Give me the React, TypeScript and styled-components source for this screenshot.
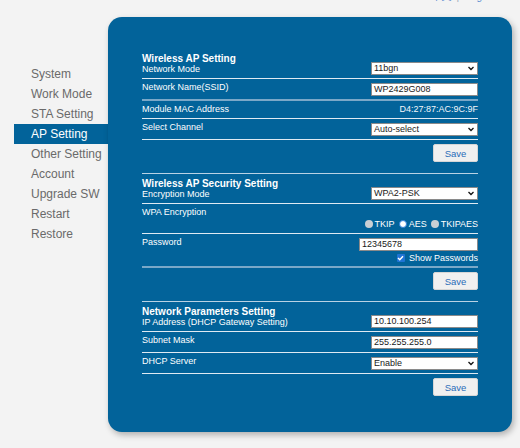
import styled, { createGlobalStyle } from "styled-components";

const GlobalStyle = createGlobalStyle`
    html, body {
        margin: 0;
        padding: 0;
        background: #f3f3f3;
        overflow: hidden;
    }
    body {
        font-family: "Liberation Sans", Arial, sans-serif;
    }
`;

const Page = styled.div`
    width: 520px;
    height: 448px;
    background: #f3f3f3;
`;

const TopBar = styled.div`
    height: 17px;
    display: flex;
    justify-content: flex-end;
    padding-right: 23px;
`;

const Lang = styled.div`
    margin-top: -9px;
    font-size: 10px;
    line-height: 12px;
    color: #5b8bd0;
    font-family: "Liberation Sans", "Noto Sans CJK SC", sans-serif;
    span {
        margin: 0 5px;
        color: #9ab;
    }
`;

const Body = styled.div`
    display: flex;
    align-items: flex-start;
`;

const Sidebar = styled.ul`
    list-style: none;
    margin: 47px 0 0;
    padding: 0 0 0 14px;
    width: 94px;
`;

const MenuItem = styled.li<{ $active?: boolean }>`
    height: 20px;
    line-height: 20px;
    padding-left: 17px;
    font-size: 12px;
    color: ${(p) => (p.$active ? "#ffffff" : "#6a6a6a")};
    background: ${(p) => (p.$active ? "#02639a" : "transparent")};
`;

const Panel = styled.div`
    width: 336px;
    height: 380px;
    padding: 32px 34px 3px;
    background: #02639a;
    border-radius: 14px;
    box-shadow: 2px 3px 6px rgba(0, 0, 0, 0.28);
`;

const Section = styled.div<{ $first?: boolean }>`
    border-top: ${(p) => (p.$first ? "none" : "1px solid #b9d2e4")};
    padding-top: 2px;
`;

const Row = styled.div<{ $thick?: boolean }>`
    display: flex;
    justify-content: space-between;
    align-items: flex-start;
    padding: 2px 0 3px;
    border-bottom: ${(p) => (p.$thick ? "2px solid #7aa8c8" : "1px solid #dfeaf3")};
    color: #ffffff;
`;

const Label = styled.div`
    font-size: 9px;
    line-height: 12px;
`;

const Title = styled.div`
    font-size: 10px;
    font-weight: bold;
    line-height: 11px;
`;

const FirstLabel = styled(Label)`
    line-height: 11px;
`;

const Value = styled.div<{ $offset?: number; $bottom?: boolean }>`
    display: flex;
    flex-direction: column;
    align-items: flex-end;
    margin-top: ${(p) => (p.$offset ?? 2)}px;
    align-self: ${(p) => (p.$bottom ? "flex-end" : "flex-start")};
`;

const Control = styled.div<{ $w?: number }>`
    position: relative;
    box-sizing: border-box;
    width: ${(p) => p.$w ?? 107}px;
    height: 13px;
    background: #ffffff;
    border: 1px solid #8a8a8a;
    font-size: 9px;
    line-height: 11px;
    padding: 0 2px;
    color: #1a1a1a;
`;

const Caret = styled.svg`
    position: absolute;
    right: 3px;
    top: 3px;
`;

const Plain = styled.div`
    font-size: 9px;
    line-height: 12px;
    color: #f2f6fa;
`;

const Radios = styled.div`
    display: flex;
    align-items: center;
    font-size: 9px;
    line-height: 12px;
`;

const RadioDot = styled.span<{ $on?: boolean }>`
    display: inline-block;
    box-sizing: border-box;
    width: 8px;
    height: 8px;
    border-radius: 50%;
    margin: 0 2px 0 4px;
    background: ${(p) => (p.$on ? "#ffffff" : "#c9cfd4")};
    border: ${(p) => (p.$on ? "1.5px solid #2f7fd8" : "none")};
`;

const CheckLine = styled.div`
    display: flex;
    align-items: center;
    margin-top: 2px;
    font-size: 9px;
    line-height: 10px;
`;

const CheckBox = styled.span`
    display: inline-flex;
    align-items: center;
    justify-content: center;
    width: 8px;
    height: 8px;
    border-radius: 1px;
    background: #1f74d4;
    margin-right: 4px;
`;

const SaveRow = styled.div`
    display: flex;
    justify-content: flex-end;
    padding: 4px 0 11px;
`;

const SaveBtn = styled.button`
    width: 45px;
    height: 18px;
    border: 1px solid #d6d6d6;
    border-radius: 2px;
    background: #f0f0f0;
    color: #2a6cb8;
    font-family: "Liberation Sans", Arial, sans-serif;
    font-size: 9.5px;
    padding: 0;
`;

function Select({ value }: { value: string }) {
    return (
        <Control>
            {value}
            <Caret width="6" height="5" viewBox="0 0 6 5">
                <path d="M0.5 1 L3 3.5 L5.5 1" stroke="#111" strokeWidth="1.3" fill="none" />
            </Caret>
        </Control>
    );
}

const menu = ["System", "Work Mode", "STA Setting", "AP Setting", "Other Setting", "Account", "Upgrade SW", "Restart", "Restore"];

export default function App() {
    return (
        <Page>
            <GlobalStyle />
            <TopBar>
                <Lang>
                    中文<span>|</span>English
                </Lang>
            </TopBar>
            <Body>
                <Sidebar>
                    {menu.map((m) => (
                        <MenuItem key={m} $active={m === "AP Setting"}>
                            {m}
                        </MenuItem>
                    ))}
                </Sidebar>
                <Panel>
                    <Section $first>
                        <Row>
                            <div>
                                <Title>Wireless AP Setting</Title>
                                <FirstLabel>Network Mode</FirstLabel>
                            </div>
                            <Value $bottom $offset={0}>
                                <Select value="11bgn" />
                            </Value>
                        </Row>
                        <Row $thick>
                            <Label>Network Name(SSID)</Label>
                            <Value>
                                <Control>WP2429G008</Control>
                            </Value>
                        </Row>
                        <Row>
                            <Label>Module MAC Address</Label>
                            <Value $offset={0}>
                                <Plain>D4:27:87:AC:9C:9F</Plain>
                            </Value>
                        </Row>
                        <Row>
                            <Label>Select Channel</Label>
                            <Value>
                                <Select value="Auto-select" />
                            </Value>
                        </Row>
                        <SaveRow>
                            <SaveBtn>Save</SaveBtn>
                        </SaveRow>
                    </Section>

                    <Section>
                        <Row>
                            <div>
                                <Title>Wireless AP Security Setting</Title>
                                <FirstLabel>Encryption Mode</FirstLabel>
                            </div>
                            <Value $bottom $offset={0}>
                                <Select value="WPA2-PSK" />
                            </Value>
                        </Row>
                        <Row>
                            <Label>WPA Encryption</Label>
                            <Value $offset={12}>
                                <Radios>
                                    <RadioDot />
                                    TKIP
                                    <RadioDot $on />
                                    AES
                                    <RadioDot />
                                    TKIPAES
                                </Radios>
                            </Value>
                        </Row>
                        <Row $thick>
                            <Label>Password</Label>
                            <Value>
                                <Control $w={119}>12345678</Control>
                                <CheckLine>
                                    <CheckBox>
                                        <svg width="7" height="6" viewBox="0 0 7 6">
                                            <path d="M1 3 L2.8 4.8 L6 1.2" stroke="#fff" strokeWidth="1.4" fill="none" />
                                        </svg>
                                    </CheckBox>
                                    Show Passwords
                                </CheckLine>
                            </Value>
                        </Row>
                        <SaveRow>
                            <SaveBtn>Save</SaveBtn>
                        </SaveRow>
                    </Section>

                    <Section>
                        <Row>
                            <div>
                                <Title>Network Parameters Setting</Title>
                                <FirstLabel>IP Address (DHCP Gateway Setting)</FirstLabel>
                            </div>
                            <Value $bottom $offset={0}>
                                <Control $w={107}>10.10.100.254</Control>
                            </Value>
                        </Row>
                        <Row>
                            <Label>Subnet Mask</Label>
                            <Value>
                                <Control>255.255.255.0</Control>
                            </Value>
                        </Row>
                        <Row>
                            <Label>DHCP Server</Label>
                            <Value>
                                <Select value="Enable" />
                            </Value>
                        </Row>
                        <SaveRow>
                            <SaveBtn>Save</SaveBtn>
                        </SaveRow>
                    </Section>
                </Panel>
            </Body>
        </Page>
    );
}
